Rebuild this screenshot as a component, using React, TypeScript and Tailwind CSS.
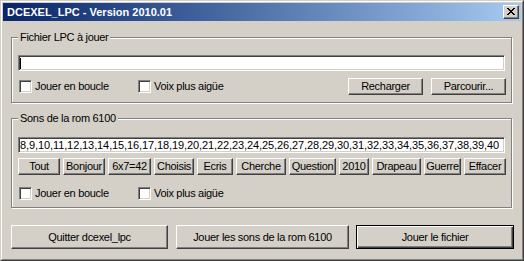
import React from "react";

const face = "bg-[#d4d0c8]";

const Button = ({
  label,
  className = "",
  isDefault = false,
}: {
  label: string;
  className?: string;
  isDefault?: boolean;
}) => {
  if (isDefault) {
    return (
      <button className={`${face} border border-black shadow-[inset_1px_1px_0_#fff,inset_-1px_-1px_0_#404040,inset_-2px_-2px_0_#808080] flex items-center justify-center whitespace-nowrap text-black ${className}`}>
        {label}
      </button>
    );
  }
  return (
    <button className={`${face} border border-t-white border-l-white border-r-[#404040] border-b-[#404040] shadow-[inset_-1px_-1px_0_#808080] flex items-center justify-center whitespace-nowrap text-black ${className}`}>
      {label}
    </button>
  );
};

const Checkbox = ({ label, className = "" }: { label: string; className?: string }) => (
  <div className={`flex items-center gap-[3px] ${className}`}>
    <div className="w-[13px] h-[13px] bg-white border border-t-[#808080] border-l-[#808080] border-r-white border-b-white shadow-[inset_1px_1px_0_#404040,inset_-1px_-1px_0_#d4d0c8]" />
    <span className="leading-none">{label}</span>
  </div>
);

const Field = ({ children, className = "" }: { children?: React.ReactNode; className?: string }) => (
  <div className={`h-[16px] w-[487px] bg-white border border-t-[#808080] border-l-[#808080] border-r-white border-b-white shadow-[inset_1px_1px_0_#404040,inset_-1px_-1px_0_#d4d0c8] flex items-center pl-[1px] overflow-hidden ${className}`}>
    {children}
  </div>
);

const GroupBox = ({
  title,
  className = "",
  children,
}: {
  title: string;
  className?: string;
  children: React.ReactNode;
}) => (
  <div className={`relative w-[501px] border border-[#808080] shadow-[inset_1px_1px_0_#fff,1px_1px_0_#fff] pl-[6px] ${className}`}>
    <span className={`absolute left-[6px] top-[-8px] ${face} px-[2px] leading-[14px]`}>{title}</span>
    {children}
  </div>
);

const CloseGlyph = () => (
  <svg width="8" height="7" viewBox="0 0 8 7" shapeRendering="crispEdges">
    <path
      fill="#000"
      d="M0 0h2v1H0zM6 0h2v1H6zM1 1h2v1H1zM5 1h2v1H5zM2 2h4v1H2zM3 3h2v1H3zM2 4h4v1H2zM1 5h2v1H1zM5 5h2v1H5zM0 6h2v1H0zM6 6h2v1H6z"
    />
  </svg>
);

const soundButtons: [string, string][] = [
  ["Tout", "w-[42px]"],
  ["Bonjour", "w-[42px]"],
  ["6x7=42", "w-[43px]"],
  ["Choisis", "w-[40px]"],
  ["Ecris", "w-[36px]"],
  ["Cherche", "w-[50px]"],
  ["Question", "w-[47px]"],
  ["2010", "w-[30px]"],
  ["Drapeau", "w-[49px]"],
  ["Guerre", "w-[37px]"],
  ["Effacer", "w-[42px]"],
];

export default function App() {
  return (
    <div className="w-[524px] h-[261px] border border-t-[#d4d0c8] border-l-[#d4d0c8] border-r-[#404040] border-b-[#404040] font-['Liberation_Sans',Arial,sans-serif] text-[11px] tracking-[-0.3px] text-black">
      <div className={`h-full ${face} border border-t-white border-l-white border-r-[#808080] border-b-[#808080] p-[1px] flex flex-col`}>
        {/* title bar */}
        <div className="h-[18px] flex items-center justify-between bg-gradient-to-r from-[#0a246a] to-[#a6caf0] pl-[4px] pr-[2px]">
          <span className="text-white font-bold text-[11px] tracking-normal leading-none">
            DCEXEL_LPC - Version 2010.01
          </span>
          <div className={`w-[16px] h-[14px] ${face} border border-t-white border-l-white border-r-[#404040] border-b-[#404040] shadow-[inset_-1px_-1px_0_#808080] flex items-center justify-center pb-[1px] pr-[1px]`}>
            <CloseGlyph />
          </div>
        </div>

        <div className="flex flex-col pl-[8px]">
          <GroupBox title="Fichier LPC à jouer" className="mt-[16px] h-[66px] pt-[17px]">
            <Field>
              <span className="w-[1px] h-[11px] bg-black" />
            </Field>
            <div className="mt-[7px] h-[17px] w-[488px] flex items-center">
              <Checkbox label="Jouer en boucle" className="ml-[1px] w-[119px]" />
              <Checkbox label="Voix plus aigüe" />
              <div className="ml-auto flex gap-[8px]">
                <Button label="Recharger" className="w-[75px] h-[17px]" />
                <Button label="Parcourir..." className="w-[75px] h-[17px]" />
              </div>
            </div>
          </GroupBox>

          <GroupBox title="Sons de la rom 6100" className="mt-[15px] h-[90px] pt-[18px]">
            <Field>
              <span className="whitespace-nowrap tracking-[-0.1px] leading-none">
                8,9,10,11,12,13,14,15,16,17,18,19,20,21,22,23,24,25,26,27,28,29,30,31,32,33,34,35,36,37,38,39,40
              </span>
            </Field>
            <div className="mt-[5px] flex gap-[3px]">
              {soundButtons.map(([label, w]) => (
                <Button key={label} label={label} className={`${w} h-[17px]`} />
              ))}
            </div>
            <div className="mt-[10px] h-[17px] flex items-center">
              <Checkbox label="Jouer en boucle" className="ml-[1px] w-[119px]" />
              <Checkbox label="Voix plus aigüe" />
            </div>
          </GroupBox>

          <div className="mt-[17px] flex">
            <Button label="Quitter dcexel_lpc" className="w-[157px] h-[24px]" />
            <Button label="Jouer les sons de la rom 6100" className="ml-[8px] w-[173px] h-[24px]" />
            <Button label="Jouer le fichier" isDefault className="ml-[7px] w-[158px] h-[24px]" />
          </div>
        </div>
      </div>
    </div>
  );
}
